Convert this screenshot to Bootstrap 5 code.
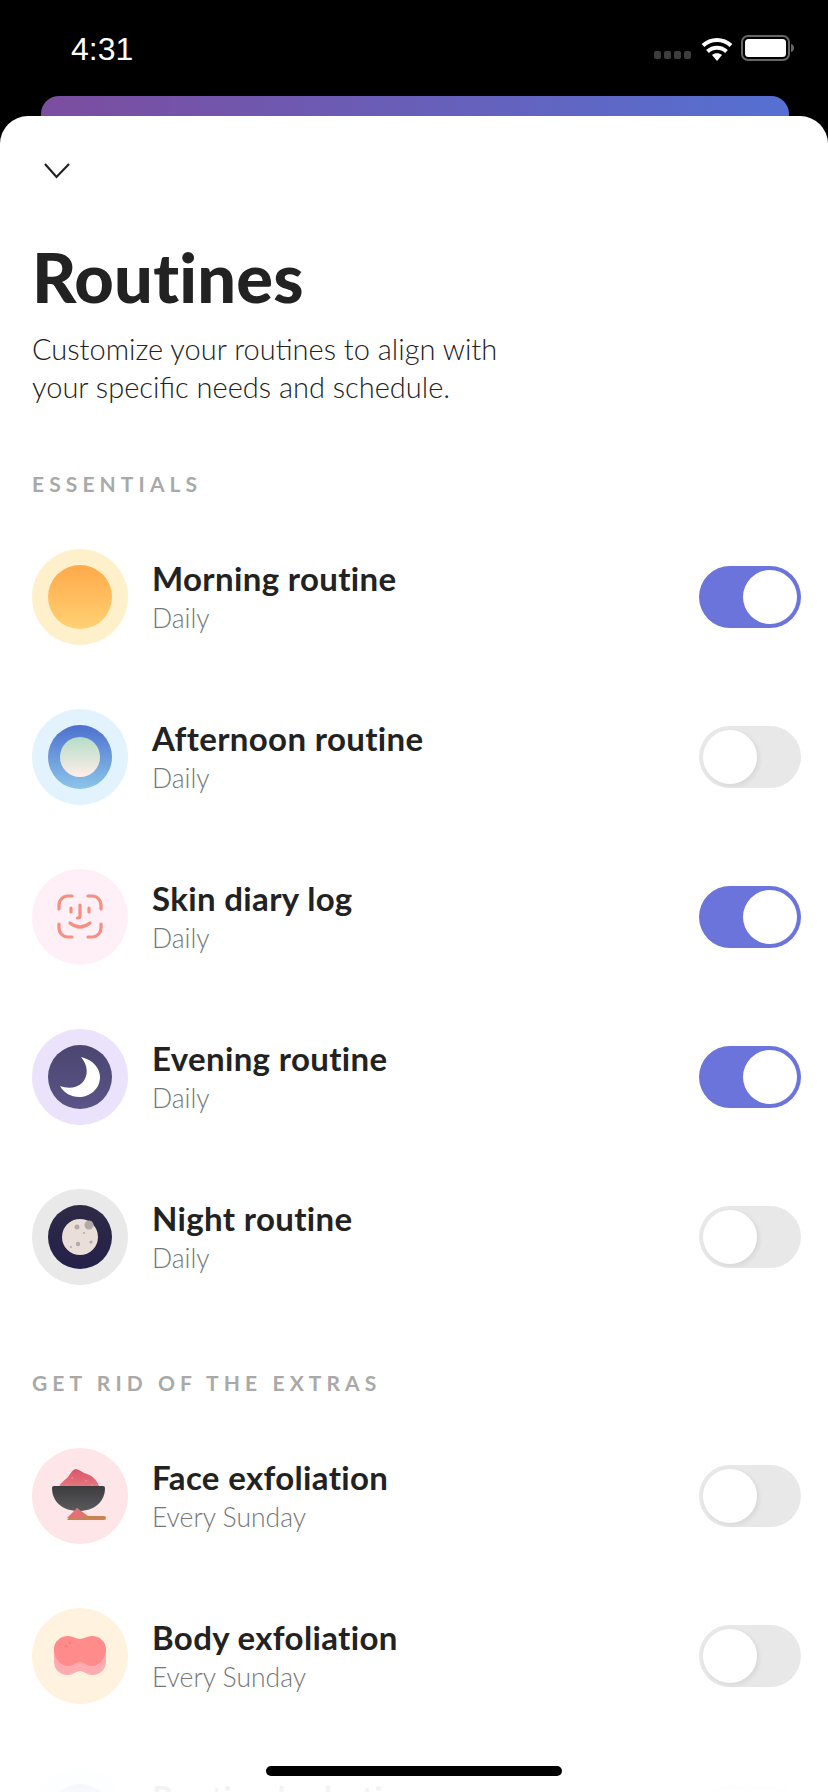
<!DOCTYPE html>
<html lang="en">
  <head>
    <meta charset="UTF-8" />
    <meta name="viewport" content="width=device-width, initial-scale=1.0" />
    <title>Routines</title>
    <link href="https://cdn.jsdelivr.net/npm/bootstrap@5.3.0/dist/css/bootstrap.min.css" rel="stylesheet" />
    <style>
      html, body { height: 1792px; overflow: hidden; background: #000; }
      body { font-family: "Lato", "Liberation Sans", sans-serif; color: #222; }
      .status-row { height: 96px; padding: 0 33px 0 71px; }
      .status-time { font-family: "Liberation Sans", sans-serif; font-size: 32px; color: #fff; line-height: 1; padding-top: 2px; }
      .sig-dots { gap: 3px; margin-top: 14px; margin-right: 2px; }
      .sig-dots i { width: 7px; height: 8px; border-radius: 2px; background: #3d3d3d; display: block; }
      .behind-card { height: 20px; margin: 0 39px 0 41px; border-radius: 18px 18px 0 0; background: linear-gradient(90deg, #7b4d9f, #5570d2); }
      .sheet { height: 1676px; background: #fff; border-radius: 28px 28px 0 0; padding: 46px 32px 0; overflow: hidden; }
      .chev { display: block; margin-left: 11px; }
      .page-title { font-size: 68.500px; font-weight: 900; line-height: 76px; margin: 59px 0 0; color: #222; letter-spacing: .2px; }
      .page-sub { font-size: 29px; font-weight: 300; line-height: 38px; margin: 15px 0 0; color: #222; }
      .sec-label { font-size: 21px; font-weight: 700; letter-spacing: 5.100px; color: #a9a9a9; line-height: 24px; text-transform: uppercase; }
      .sec-a { margin-top: 66px; }
      .sec-b { margin-top: 86px; }
      .routine-list { margin-top: 53px; display: flex; flex-direction: column; gap: 64px; }
      .routine-row { height: 96px; display: flex; align-items: center; }
      .ico-wrap { width: 96px; height: 96px; flex: none; }
      .ico-wrap svg { display: block; }
      .routine-text { margin-left: 24px; flex-grow: 1; margin-top: -3px; }
      .routine-name { font-size: 33px; font-weight: 700; line-height: 40px; color: #222; letter-spacing: .35px; }
      .routine-when { font-size: 26.500px; font-weight: 300; line-height: 30px; color: #777; margin-top: 5px; }
      .tgl { width: 102px; height: 62px; border-radius: 31px; position: relative; flex: none; margin-right: -5px; background: #e8e8e8; }
      .tgl::after { content: ""; position: absolute; top: 4px; left: 4px; width: 54px; height: 54px; border-radius: 50%; background: #fff; box-shadow: 2px 2px 5px rgba(0,0,0,.08); }
      .tgl.on { background: #6a74da; }
      .tgl.on::after { left: 44px; box-shadow: none; }
      .fade-out { position: absolute; left: 0; right: 0; bottom: 0; height: 60px; background: linear-gradient(rgba(255,255,255,.9), rgba(255,255,255,.95)); pointer-events: none; }
      .home-bar { position: absolute; left: 266px; bottom: 16px; width: 296px; height: 10px; border-radius: 5px; background: #000; }
    </style>
  </head>
  <body class="position-relative">
    <div class="status-row d-flex justify-content-between align-items-center">
      <span class="status-time">4:31</span>
      <div class="d-flex align-items-center">
        <div class="sig-dots d-flex"><i></i><i></i><i></i><i></i></div>
        <svg class="mx-2" width="32" height="26" viewBox="0 0 32 26">
          <path d="M16 26l-5-6c3-2.400 7-2.400 10 0z" fill="#fff" />
          <path d="M6.500 14.500c5.500-5 13.500-5 19 0M2 8.500c8-7.500 20-7.500 28 0" transform="translate(0 2)" fill="none" stroke="#fff" stroke-width="4" />
        </svg>
        <svg width="54" height="26" viewBox="0 0 54 26">
          <rect x="1" y="1" width="47" height="24" rx="6" fill="none" stroke="#666" stroke-width="2" />
          <rect x="4" y="4" width="41" height="18" rx="3.500" fill="#fff" />
          <path d="M50 9c2 .5 3 2 3 4s-1 3.500-3 4z" fill="#666" />
        </svg>
      </div>
    </div>
    <div class="behind-card"></div>
    <div class="sheet">
      <svg class="chev" width="28" height="18" viewBox="0 0 28 18"><path d="M2 2l11.500 13L26 2" fill="none" stroke="#222" stroke-width="2.200" /></svg>
      <h1 class="page-title">Routines</h1>
      <p class="page-sub">Customize your routines to align with<br />your specific needs and schedule.</p>

      <div class="sec-label sec-a">Essentials</div>
      <div class="routine-list" id="listA"></div>

      <div class="sec-label sec-b">Get rid of the extras</div>
      <div class="routine-list" id="listB"></div>
    </div>
    <div class="fade-out"></div>
    <div class="home-bar"></div>

    <svg width="0" height="0" class="position-absolute">
      <defs>
        <linearGradient id="gSun" x1="0" y1="0" x2="0" y2="1"><stop offset="0" stop-color="#ffa94a" /><stop offset="1" stop-color="#ffd173" /></linearGradient>
        <linearGradient id="gDay" x1="0" y1="0" x2="0" y2="1"><stop offset="0" stop-color="#4d70cf" /><stop offset="1" stop-color="#8cc5e8" /></linearGradient>
        <linearGradient id="gDayIn" x1="0" y1="0" x2="0" y2="1"><stop offset="0" stop-color="#b5dcc8" /><stop offset="1" stop-color="#ffeee8" /></linearGradient>
        <linearGradient id="gDusk" x1="0" y1="0" x2="0" y2="1"><stop offset="0" stop-color="#4b4570" /><stop offset="1" stop-color="#5b5588" /></linearGradient>
        <linearGradient id="gNight" x1="0" y1="0" x2="0" y2="1"><stop offset="0" stop-color="#2e2a45" /><stop offset="1" stop-color="#24204a" /></linearGradient>
        <linearGradient id="gBowl" x1="0" y1="0" x2="0" y2="1"><stop offset="0" stop-color="#3c3c40" /><stop offset="1" stop-color="#5a5a5c" /></linearGradient>
        <linearGradient id="gPowder" x1="0" y1="0" x2="0" y2="1"><stop offset="0" stop-color="#d8566c" /><stop offset="1" stop-color="#e87a80" /></linearGradient>
      </defs>
    </svg>

    <script>
      // Icon drawings, all on a 96x96 canvas
      const icons = {
        sun: `<circle cx="48" cy="48" r="48" fill="#fff0cc"/><circle cx="48" cy="48" r="32" fill="url(#gSun)"/>`,
        day: `<circle cx="48" cy="48" r="48" fill="#e3f3fd"/><circle cx="48" cy="48" r="32" fill="url(#gDay)"/><circle cx="48" cy="48" r="20" fill="url(#gDayIn)"/>`,
        face: `<circle cx="48" cy="48" r="48" fill="#fff0f7"/>
          <g fill="none" stroke="#f58f80" stroke-width="3.200" stroke-linecap="round">
            <path d="M27 40v-4a9 9 0 0 1 9-9h4M56 27h4a9 9 0 0 1 9 9v4M69 55v4a9 9 0 0 1-9 9h-4M40 68h-4a9 9 0 0 1-9-9v-4"/>
            <path d="M39 39v4M57 39v4M48 36v11q0 2-2.500 2M38 54q10 8 20 0"/>
          </g>`,
        moon: `<circle cx="48" cy="48" r="48" fill="#eae3fb"/><circle cx="48" cy="48" r="32" fill="url(#gDusk)"/><path d="M49 28C62 31 68 40 68 48 68 60 58 68 47 68 39 68 32 64 28 57 36 60 45 59 50 54 57 47 56 36 49 28z" fill="#fff"/>`,
        night: `<circle cx="48" cy="48" r="48" fill="#e9e9ea"/><circle cx="48" cy="48" r="32" fill="url(#gNight)"/><circle cx="48" cy="48" r="18" fill="#eadfd8"/>
          <g fill="#b3aaa8"><circle cx="57" cy="36" r="4.500"/><circle cx="45" cy="38" r="2.500"/><circle cx="46" cy="55" r="2.200"/><circle cx="59" cy="53" r="1.600"/><circle cx="39" cy="58" r="1"/><circle cx="52" cy="44" r="1"/></g>`,
        bowl: `<circle cx="48" cy="48" r="48" fill="#fde5e8"/>
          <path d="M26 41c2-6 7-9 10-12 3-4 5-8 8-8 4 1 7 4 11 5 6 2 11 7 13 15z" fill="url(#gPowder)"/>
          <g fill="#f29aa0"><circle cx="40" cy="30" r=".8"/><circle cx="54" cy="33" r=".8"/><circle cx="35" cy="38" r=".8"/><circle cx="60" cy="37" r=".8"/></g>
          <path d="M20 40a2 2 0 0 1 2-2h49a2 2 0 0 1 2 2c0 14-11 23-26.500 23S20 54 20 40z" fill="url(#gBowl)"/>
          <path d="M35 72l10-12 11 8h16a2 2 0 0 1 0 4z" fill="#c98452"/>
          <path d="M35 70l10-10 9 8-6 2z" fill="#e2707a"/>`,
        sponge: `<circle cx="48" cy="48" r="48" fill="#fff3df"/>
          <path d="M22 41v13c0 7 6 13 14 13 5 0 8-4 12-4s7 4 12 4c8 0 14-6 14-13V41z" fill="#ffabb0"/>
          <path d="M36 28c5 0 8 3 12 3s7-3 12-3c8 0 14 6 14 13 0 10-7 17-14 17-5 0-8-4-12-4s-7 4-12 4c-7 0-14-7-14-17 0-7 6-13 14-13z" fill="#ff8b8b"/>
          <g fill="#f26f70"><circle cx="34" cy="38" r=".9"/><circle cx="38" cy="35" r=".9"/></g>`,
      };

      const essentials = [
        { ico: "sun", name: "Morning routine", when: "Daily", on: true },
        { ico: "day", name: "Afternoon routine", when: "Daily", on: false },
        { ico: "face", name: "Skin diary log", when: "Daily", on: true },
        { ico: "moon", name: "Evening routine", when: "Daily", on: true },
        { ico: "night", name: "Night routine", when: "Daily", on: false },
      ];
      const extras = [
        { ico: "bowl", name: "Face exfoliation", when: "Every Sunday", on: false },
        { ico: "sponge", name: "Body exfoliation", when: "Every Sunday", on: false },
        { ico: "day", name: "Routine hydration", when: "Daily", on: false },
      ];

      function fill(id, rows) {
        document.getElementById(id).innerHTML = rows.map((r) => `
          <div class="routine-row">
            <div class="ico-wrap"><svg width="96" height="96" viewBox="0 0 96 96">${icons[r.ico]}</svg></div>
            <div class="routine-text">
              <div class="routine-name">${r.name}</div>
              <div class="routine-when">${r.when}</div>
            </div>
            <div class="tgl ${r.on ? "on" : ""}"></div>
          </div>`).join("");
      }
      fill("listA", essentials);
      fill("listB", extras);
    </script>
    <script src="https://cdn.jsdelivr.net/npm/bootstrap@5.3.0/dist/js/bootstrap.bundle.min.js"></script>
  </body>
</html>
